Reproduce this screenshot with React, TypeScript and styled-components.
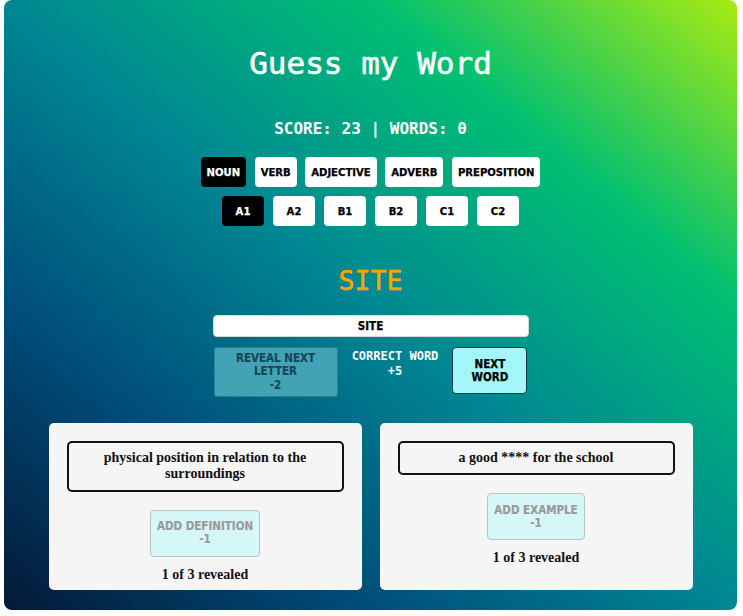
import React from 'react';
import styled, { createGlobalStyle } from 'styled-components';

const Global = createGlobalStyle`
  html, body { margin: 0; padding: 0; background: #ffffff; }
  * { box-sizing: border-box; }
`;

const SANS = `"DejaVu Sans", Verdana, sans-serif`;
const MONO = `"DejaVu Sans Mono", monospace`;
const SERIF = `"Liberation Serif", "Times New Roman", serif`;

const Page = styled.div`
  margin: 0 6px 0 4px;
  min-height: 610px;
  border-radius: 8px;
  background: linear-gradient(to right top, #051937, #004d7a, #008793, #00bf72, #a8eb12);
  display: flex;
  flex-direction: column;
  align-items: center;
  padding: 44px 0 20px;
`;

const Title = styled.h1`
  margin: 0;
  font-family: ${MONO};
  font-weight: normal;
  font-size: 31px;
  line-height: 38px;
  color: #ffffff;
  -webkit-text-stroke: 0.6px #ffffff;
`;

const Score = styled.div`
  margin-top: 37px;
  font-family: ${MONO};
  font-weight: bold;
  font-size: 16px;
  line-height: 20px;
  color: #ffffff;
  white-space: pre;
`;

const ChipRow = styled.div<{ $top: number }>`
  margin-top: ${(p) => p.$top}px;
  display: flex;
  gap: 8.5px;
`;

const Chip = styled.button<{ $active?: boolean; $fixed?: boolean }>`
  height: 30px;
  width: ${(p) => (p.$fixed ? '42.5px' : 'auto')};
  padding: 0 6px;
  border: none;
  border-radius: 4px;
  background: ${(p) => (p.$active ? '#000000' : '#ffffff')};
  color: ${(p) => (p.$active ? '#ffffff' : '#000000')};
  font-family: ${SANS};
  font-stretch: condensed;
  font-weight: bold;
  font-size: 11.2px;
  -webkit-text-stroke: 0.25px ${(p) => (p.$active ? '#ffffff' : '#000000')};
  cursor: pointer;
`;

const Word = styled.h2`
  margin: 40px 0 0;
  font-family: ${MONO};
  font-weight: normal;
  font-size: 26.5px;
  line-height: 30px;
  color: #ffa300;
  -webkit-text-stroke: 0.5px #ffa300;
`;

const Guess = styled.input`
  margin-top: 19px;
  width: 316px;
  height: 22px;
  border: 1px solid #d8d8d8;
  border-radius: 4px;
  background: #ffffff;
  text-align: center;
  font-family: ${SANS};
  font-stretch: condensed;
  font-weight: bold;
  font-size: 11.5px;
  -webkit-text-stroke: 0.25px #000000;
  color: #000000;
  outline: none;
`;

const ActionRow = styled.div`
  margin-top: 10px;
  width: 314px;
  display: flex;
  justify-content: space-between;
  align-items: flex-start;
`;

const Reveal = styled.button`
  width: 124px;
  height: 50px;
  padding: 3px 4px;
  border: 1px solid #2c7f91;
  border-radius: 3px;
  background: #42a3b5;
  color: #184656;
  font-family: ${SANS};
  font-stretch: condensed;
  font-weight: bold;
  font-size: 11.5px;
  line-height: 13.5px;
  -webkit-text-stroke: 0.2px #184656;
`;

const Bonus = styled.div`
  margin-top: 2px;
  font-family: ${MONO};
  font-weight: bold;
  font-size: 12px;
  line-height: 15px;
  color: #ffffff;
  text-align: center;
`;

const NextBtn = styled.button`
  width: 75px;
  height: 47px;
  padding: 0;
  border: 1px solid #1c3b3e;
  border-radius: 4px;
  background: #a3f7fb;
  color: #000000;
  font-family: ${SANS};
  font-stretch: condensed;
  font-weight: bold;
  font-size: 11.5px;
  line-height: 13px;
  -webkit-text-stroke: 0.25px #000000;
  cursor: pointer;
`;

const Cards = styled.div`
  margin-top: 26px;
  width: 644px;
  display: grid;
  grid-template-columns: 1fr 1fr;
  gap: 18px;
`;

const Card = styled.div`
  background: #f5f5f5;
  border-radius: 5px;
  padding: 18px 18px 7px;
  display: flex;
  flex-direction: column;
  align-items: center;
`;

const Clue = styled.div`
  width: 100%;
  border: 2px solid #111111;
  border-radius: 5px;
  padding: 7px 10px;
  font-family: ${SERIF};
  font-weight: bold;
  font-size: 14px;
  line-height: 16.3px;
  color: #111111;
  text-align: center;
`;

const AddBtn = styled.button`
  margin-top: 18px;
  padding: 9.5px 6px;
  border: 1px solid #b8c4c4;
  border-radius: 4px;
  background: #d5f7f8;
  color: #9a9a9a;
  font-family: ${SANS};
  font-stretch: condensed;
  font-weight: bold;
  font-size: 11.5px;
  line-height: 13px;
  -webkit-text-stroke: 0.2px #9a9a9a;
`;

const Revealed = styled.div`
  margin-top: 10px;
  font-family: ${SERIF};
  font-weight: bold;
  font-size: 14px;
  line-height: 16px;
  color: #111111;
`;

const posList = ['NOUN', 'VERB', 'ADJECTIVE', 'ADVERB', 'PREPOSITION'];
const levels = ['A1', 'A2', 'B1', 'B2', 'C1', 'C2'];

export default function App() {
  return (
    <>
      <Global />
      <Page>
        <Title>Guess my Word</Title>
        <Score>SCORE: 23 | WORDS: 0</Score>
        <ChipRow $top={18}>
          {posList.map((p, i) => (
            <Chip key={p} $active={i === 0}>{p}</Chip>
          ))}
        </ChipRow>
        <ChipRow $top={9}>
          {levels.map((l, i) => (
            <Chip key={l} $fixed $active={i === 0}>{l}</Chip>
          ))}
        </ChipRow>
        <Word>SITE</Word>
        <Guess readOnly value="SITE" />
        <ActionRow>
          <Reveal disabled>
            REVEAL NEXT
            <br />
            LETTER
            <br />
            -2
          </Reveal>
          <Bonus>
            CORRECT WORD
            <br />
            +5
          </Bonus>
          <NextBtn>
            NEXT
            <br />
            WORD
          </NextBtn>
        </ActionRow>
        <Cards>
          <Card>
            <Clue>physical position in relation to the surroundings</Clue>
            <AddBtn disabled>
              ADD DEFINITION
              <br />
              -1
            </AddBtn>
            <Revealed>1 of 3 revealed</Revealed>
          </Card>
          <Card>
            <Clue>a good **** for the school</Clue>
            <AddBtn disabled>
              ADD EXAMPLE
              <br />
              -1
            </AddBtn>
            <Revealed>1 of 3 revealed</Revealed>
          </Card>
        </Cards>
      </Page>
    </>
  );
}
